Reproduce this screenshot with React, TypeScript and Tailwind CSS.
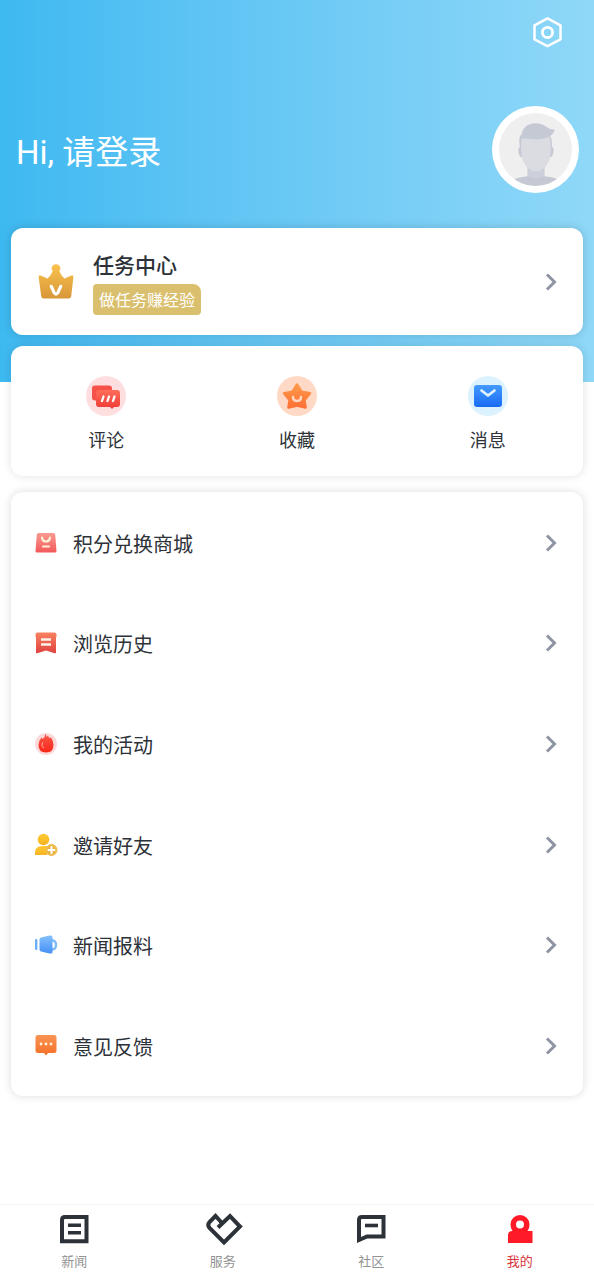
import React from "react";

const shortcuts = [
  { label: "评论", icon: <CommentIcon /> },
  { label: "收藏", icon: <StarIcon /> },
  { label: "消息", icon: <MailIcon /> },
];

const menu = [
  { label: "积分兑换商城", icon: <ShopIcon /> },
  { label: "浏览历史", icon: <HistoryIcon /> },
  { label: "我的活动", icon: <ActivityIcon /> },
  { label: "邀请好友", icon: <InviteIcon /> },
  { label: "新闻报料", icon: <ReportIcon /> },
  { label: "意见反馈", icon: <FeedbackIcon /> },
];

const tabs = [
  { label: "新闻", icon: <NewsTab />, active: false },
  { label: "服务", icon: <ServiceTab />, active: false },
  { label: "社区", icon: <CommunityTab />, active: false },
  { label: "我的", icon: <MineTab />, active: true },
];

function Gradient({ id, from, to }: { id: string; from: string; to: string }) {
  return (
    <defs>
      <linearGradient id={id} x1="0" y1="0" x2="0" y2="1">
        <stop offset="0" stopColor={from} />
        <stop offset="1" stopColor={to} />
      </linearGradient>
    </defs>
  );
}

function SettingsIcon() {
  return (
    <svg viewBox="0 0 32 32" className="size-8" fill="none" stroke="#fff">
      <path d="M16.5 2.400 29.500 9.300v14L16.500 30.200 3.500 23.300v-14z" strokeWidth="2.500" strokeLinejoin="round" />
      <circle cx="16.500" cy="16.400" r="5.100" strokeWidth="2.800" />
    </svg>
  );
}

function Avatar() {
  return (
    <svg viewBox="0 0 72 72" className="size-full rounded-full bg-[#efeff0]">
      <path d="M28 50h17v15H28z" fill="#cdd0da" />
      <path d="M15 65.500c4-2 9-2.500 13-3 4 2.500 13 2.500 17 0 4 .5 9 1 13 3V72H15z" fill="#c5c9d4" />
      <path d="M22 33c-4-1-4 10 1 11zM51 33c4-1 4 10-1 11z" fill="#c5c9d4" />
      <path d="M21 22h29q3 4 2 13l-2 6H22l-1-6q-2-8 0-13z" fill="#c5c9d4" />
      <path d="M22.500 24c8 2 20 2 27-2 2 7 2 15 1 21-2 9-7 14.500-14 14.500S24.500 52 22.500 43c-1-7-1-13 0-19z" fill="#dadce2" />
      <path d="M22 25.500c-1-9 5-15.500 14-15.500 6 0 10 3 13 5 2 1 4 1.500 6 1-1 5-5 8-12 9.500-7 1.500-14-1-21 0z" fill="#c5c9d4" />
    </svg>
  );
}

function CrownIcon() {
  return (
    <svg viewBox="0 0 36 36" className="size-9">
      <Gradient id="crown" from="#f9c24c" to="#d99739" />
      <path
        d="M18 .2a4.300 4.300 0 0 1 3.400 7q1.400 4.200 5 7.200l7.200-2.800q2-.7 1.800 1.200l-2.200 19.500q-.3 2.200-2.500 2.200H5.800q-2.200 0-2.600-2.200L.6 12.800q-.2-1.900 1.800-1.200l7.200 2.800q3.600-3 5-7.200A4.300 4.300 0 0 1 18 .2z"
        fill="url(#crown)"
      />
      <path d="m13.300 22.300 2.800 6.400q1.900 2.800 3.800 0l2.800-6.400" fill="none" stroke="#fff" strokeWidth="3.200" strokeLinecap="round" />
    </svg>
  );
}

function CommentIcon() {
  return (
    <svg viewBox="0 0 40 40" className="size-10">
      <Gradient id="comment" from="#ff6d59" to="#f03a35" />
      <circle cx="20" cy="20" r="20" fill="#ffdedf" />
      <rect x="6" y="9.500" width="20" height="15" rx="3" fill="#f5534a" />
      <path d="M13 14h18q3 0 3 3v11q0 3-3 3h-3l-2 2-2-2H13q-3 0-3-3V17q0-3 3-3z" fill="url(#comment)" />
      <path d="m16 25 1.500-4.500m4 4.500 1.500-4.500m4 4.500 1.500-4.500" stroke="#fff" strokeWidth="2.300" strokeLinecap="round" />
    </svg>
  );
}

function StarIcon() {
  return (
    <svg viewBox="0 0 40 40" className="size-10">
      <Gradient id="star" from="#ff9a49" to="#ff7135" />
      <circle cx="20" cy="20" r="20" fill="#ffd9c5" />
      <path
        d="m20 8.500 4.500 7.200 8.500 1.500-5.500 6.800 1 7.500-8.500-2-8.500 2 1-7.500L7 17.200l8.500-1.500z"
        fill="url(#star)"
        stroke="url(#star)"
        strokeWidth="2.500"
        strokeLinejoin="round"
      />
      <path d="M16 21q0 4 4 4t4-4" fill="none" stroke="#ffd9c5" strokeWidth="2.400" strokeLinecap="round" />
    </svg>
  );
}

function MailIcon() {
  return (
    <svg viewBox="0 0 40 40" className="size-10">
      <Gradient id="mail" from="#459bff" to="#176bf3" />
      <circle cx="20" cy="20" r="20" fill="#dcf2fe" />
      <rect x="6" y="9" width="28" height="22" rx="3" fill="url(#mail)" />
      <path d="m13.500 14.500 6.500 5 6.500-5" fill="none" stroke="#dff0ff" strokeWidth="2.800" strokeLinecap="round" strokeLinejoin="round" />
    </svg>
  );
}

function ShopIcon() {
  return (
    <svg viewBox="0 0 24 24" className="size-6">
      <Gradient id="shop" from="#fa9a90" to="#f2595c" />
      <path d="M4.500 2h15q1.500 0 1.700 1.500L22.500 20q0 1.500-1.500 1.500H3Q1.500 21.500 1.500 20L2.800 3.500Q3 2 4.500 2z" fill="url(#shop)" />
      <path d="M8 6.500q.5 4 4 4t4-4M9 15.500h6" fill="none" stroke="#fff0d8" strokeWidth="2.200" strokeLinecap="round" />
    </svg>
  );
}

function HistoryIcon() {
  return (
    <svg viewBox="0 0 24 24" className="size-6">
      <Gradient id="history" from="#f98362" to="#df4140" />
      <path d="M3.500 1.500h17q2 0 2 2v2l-.5 1v15q0 1-1.200.8L12 19.500l-8.800 2.800q-1.200.2-1.200-.8v-15l-.5-1v-2q0-2 2-2z" fill="url(#history)" />
      <path d="M7 8.500h10M7 13.500h10" stroke="#fff2e8" strokeWidth="2.600" />
    </svg>
  );
}

function ActivityIcon() {
  return (
    <svg viewBox="0 0 24 24" className="size-6">
      <Gradient id="activity" from="#f9584b" to="#fa2517" />
      <circle cx="12" cy="12" r="11" fill="#fcd8d9" />
      <path d="M11.500 2q1 1 1 3L14 3.500q.5 1.500 1.500 2.500l1.500-.5q2.500 3.500 2.500 7.500 0 7.500-7.500 7.500T4.500 13Q4.500 9 7.500 5.500L8.500 7q2.500-1.500 3-5z" fill="url(#activity)" />
      <path d="M8.500 10.500q-2 3 1 5.500" fill="none" stroke="#ffb0a5" strokeWidth="1" strokeLinecap="round" />
    </svg>
  );
}

function InviteIcon() {
  return (
    <svg viewBox="0 0 24 24" className="size-6">
      <Gradient id="invite" from="#ffca34" to="#f5b41f" />
      <circle cx="9.500" cy="6.500" r="5.800" fill="url(#invite)" />
      <path d="M1 22v-2q0-7 7-7h4q3 0 4 1l-3 8z" fill="url(#invite)" />
      <circle cx="17.500" cy="17" r="5.500" fill="#fff3d6" stroke="#edb537" strokeWidth="1" />
      <circle cx="17.500" cy="17" r="5" fill="#e9b440" />
      <path d="M17.500 14v6m-3-3h6" stroke="#fff" strokeWidth="2" strokeLinecap="round" />
    </svg>
  );
}

function ReportIcon() {
  return (
    <svg viewBox="0 0 24 24" className="size-6">
      <Gradient id="report" from="#83c0fb" to="#468ff6" />
      <rect x="1" y="6" width="2.400" height="11" rx="1" fill="#6aaef5" />
      <path d="M18 7.500q4 0 4 4.500t-4 4.500" fill="none" stroke="#7ebcf8" strokeWidth="2.400" />
      <path d="M7 4.500 15.500 2.500q3-.4 3 1.500v15q0 2-3 1.500L7 18.500Q5.500 18 5.500 16.500v-10Q5.500 5 7 4.500z" fill="url(#report)" />
    </svg>
  );
}

function FeedbackIcon() {
  return (
    <svg viewBox="0 0 24 24" className="size-6">
      <Gradient id="feedback" from="#f99454" to="#f56f27" />
      <path d="M4 1h16q2.500 0 2.500 2.500v13Q22.500 19 20 19h-6l-2 2.500L10 19H4q-2.500 0-2.500-2.500v-13Q1.500 1 4 1z" fill="url(#feedback)" />
      <path d="M7 10h.01m4.990 0h.01m4.990 0h.01" stroke="#fff2dc" strokeWidth="2.800" strokeLinecap="round" />
    </svg>
  );
}

function Chevron() {
  return (
    <svg viewBox="0 0 12 18" className="h-[18px] w-3 shrink-0" fill="none" stroke="#8f94a3" strokeWidth="3">
      <path d="m2 1.500 7.500 7.500L2 16.500" />
    </svg>
  );
}

function NewsTab() {
  return (
    <svg viewBox="0 0 40 34" className="h-[34px] w-10" fill="none" stroke="#2d3238" strokeWidth="4">
      <path d="M11 5h21.500v24.200H8V8q0-3 3-3z" />
      <path d="M14 13.200h13M14 20.800h13" strokeWidth="3.600" />
    </svg>
  );
}

function ServiceTab() {
  return (
    <svg viewBox="0 0 40 34" className="h-[34px] w-10" fill="none" stroke="#2d3238" strokeWidth="4">
      <path d="m15 15.500 12-11.500 10 10.500L21 30.500 6.500 16q-2.500-3 0-6l6-6 6 6.500" />
    </svg>
  );
}

function CommunityTab() {
  return (
    <svg viewBox="0 0 40 34" className="h-[34px] w-10" fill="none" stroke="#2d3238" strokeWidth="4">
      <path d="M11 5h21.500v19.500H16l-8 3.500V8q0-3 3-3z" />
      <path d="M14 13.500h13" strokeWidth="3.600" />
    </svg>
  );
}

function MineTab() {
  return (
    <svg viewBox="0 0 40 34" className="h-[34px] w-10">
      <path
        fill="#fe1b27"
        fillRule="evenodd"
        d="M20 3a9.500 9.500 0 0 1 9.500 9.500q0 4-2 6.500H32.500v12H8V23q0-4 4.500-4-2-2.500-2-6.500A9.500 9.500 0 0 1 20 3zm0 5.500a4 4 0 1 0 0 8 4 4 0 0 0 0-8z"
      />
    </svg>
  );
}

const App = () => {
  return (
    <div className="flex min-h-screen flex-col bg-white font-[Roboto,'Noto_Sans_CJK_SC',sans-serif] text-[#2d3238]">
      <header className="bg-linear-to-r from-[#3db9f1] to-[#8fd8f8] px-[15px] pt-4 pb-[189px] text-white">
        <div className="flex justify-end pr-4">
          <button type="button" aria-label="设置">
            <SettingsIcon />
          </button>
        </div>
        <div className="mt-[58px] flex items-center justify-between">
          <a href="#login" className="pt-1.5 pl-px text-[33px] leading-10">
            Hi, 请登录
          </a>
          <div className="size-[87px] rounded-full bg-white p-[7px]">
            <Avatar />
          </div>
        </div>
      </header>

      <main className="-mt-[154px] mb-6 flex flex-col px-[11px]">
        <a href="#task" className="flex items-center rounded-xl bg-white py-5 pr-[26px] pl-[27px] shadow-[0_0_10px_rgba(0,0,0,0.16)]">
          <CrownIcon />
          <div className="ml-[19px] flex flex-1 flex-col items-start gap-1 pt-1">
            <h2 className="text-[21px] leading-7 font-medium">任务中心</h2>
            <span className="rounded-sm rounded-tr-lg bg-[#dabf6e] px-1.5 pt-0.5 text-base leading-[29px] text-white">
              做任务赚经验
            </span>
          </div>
          <Chevron />
        </a>

        <section className="mt-[11px] grid grid-cols-3 rounded-xl bg-white pt-[30px] pb-[21px] shadow-[0_0_10px_rgba(0,0,0,0.12)]">
          {shortcuts.map((item) => (
            <a key={item.label} href="#shortcut" className="flex flex-col items-center gap-[11px] text-lg leading-7">
              {item.icon}
              {item.label}
            </a>
          ))}
        </section>

        <section className="mt-4 grid min-h-[604px] auto-rows-fr rounded-xl bg-white shadow-[0_0_10px_rgba(0,0,0,0.14)]">
          {menu.map((item) => (
            <a key={item.label} href="#menu" className="flex items-center pt-px pr-[26px] pl-[23px]">
              {item.icon}
              <span className="ml-[15px] flex-1 pt-1 text-xl">{item.label}</span>
              <Chevron />
            </a>
          ))}
        </section>
      </main>

      <nav className="sticky bottom-0 mt-auto grid grid-cols-4 border-t border-[#f4f4f4] bg-white pt-[7px] pb-2">
        {tabs.map((tab) => (
          <a
            key={tab.label}
            href="#tab"
            className={
              "flex flex-col items-center gap-1.5 text-[13px] leading-5 " + (tab.active ? "text-[#d8373c]" : "text-[#929292]")
            }
          >
            {tab.icon}
            {tab.label}
          </a>
        ))}
      </nav>
    </div>
  );
};

export default App;
